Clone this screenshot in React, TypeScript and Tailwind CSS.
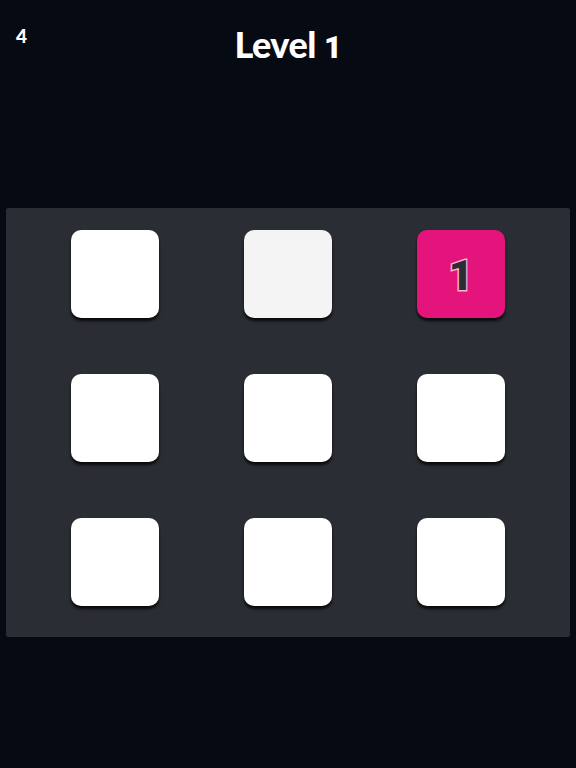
const tiles = [
  { bg: "bg-white" },
  { bg: "bg-[#f4f4f4]" },
  { bg: "bg-[#e5147c]", label: "1" },
  { bg: "bg-white" },
  { bg: "bg-white" },
  { bg: "bg-white" },
  { bg: "bg-white" },
  { bg: "bg-white" },
  { bg: "bg-white" },
];

export default function App() {
  return (
    <main className="h-[768px] w-full bg-[#060a12] font-['Lato',sans-serif] text-white">
      <header className="grid h-[208px] grid-cols-3 items-start">
        <div className="pl-[16px] pt-[24px] text-[19px] font-black leading-[24px]">4</div>
        <h1 className="pt-[22px] text-center text-[36px] font-black leading-[44px] tracking-[-0.5px]">
          Level <span className="font-['Roboto',sans-serif] text-[31px]">1</span>
        </h1>
        <div />
      </header>
      <section className="mx-[6px] h-[429px] rounded-[2px] bg-[#2a2d33] pl-[65px] pt-[22px]">
        <div className="grid grid-cols-[88px_88px_88px] gap-x-[85px] gap-y-[56px]">
          {tiles.map((tile, i) => (
            <div
              key={i}
              className={`flex h-[88px] w-[88px] items-center justify-center rounded-[10px] shadow-[0_3px_3px_rgba(0,0,0,0.8)] ${tile.bg}`}
            >
              {tile.label && (
                <span className="pt-[4px] font-['Roboto',sans-serif] text-[42px] font-black leading-none text-[#2b2d33] [-webkit-text-stroke:3px_#f7b0d2] [paint-order:stroke_fill]">
                  {tile.label}
                </span>
              )}
            </div>
          ))}
        </div>
      </section>
    </main>
  );
}
